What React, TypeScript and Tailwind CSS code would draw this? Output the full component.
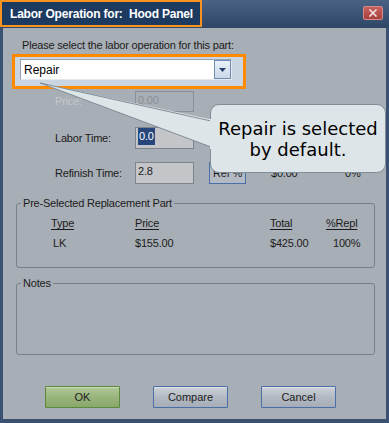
import React from "react";

const ui = "font-['Liberation_Sans',Arial,sans-serif]";

function GroupBox({ title, className, children }: { title: string; className: string; children?: React.ReactNode }) {
  return (
    <fieldset className={`border border-[#7a8089] rounded-[3px] ml-[13px] w-[359px] ${className}`}>
      <legend className="ml-[4px] px-[2px] text-[11px] leading-[13px] tracking-[-0.2px] text-[#1c1c1c]">{title}</legend>
      {children}
    </fieldset>
  );
}

function Btn({ label, ok }: { label: string; ok?: boolean }) {
  return (
    <div
      className={[
        "w-[75px] h-[22px] flex items-center justify-center text-[11px] text-[#1e1e1e] rounded-[1px] border",
        ok
          ? "border-[#5b8a3e] bg-gradient-to-b from-[#b2c89a] via-[#98b47b] to-[#8aa76c] shadow-[inset_0_1px_0_#c9dab5]"
          : "border-[#4a6ea8] bg-gradient-to-b from-[#cdd2d9] via-[#b3b9c2] to-[#a6adb7] shadow-[inset_0_1px_0_#dde1e6]",
      ].join(" ")}
    >
      {label}
    </div>
  );
}

export default function App() {
  return (
    <div className={`relative w-[389px] h-[423px] bg-[#3a5171] flex flex-col overflow-hidden ${ui}`}>
      {/* title bar */}
      <div className="h-[28px] flex items-start justify-between bg-gradient-to-b from-[#4a6283] to-[#2f4767]">
        <div className="h-[27px] w-[202px] border-2 border-[#f7931e] bg-[#1d3a61] flex items-center pl-[8px]">
          <span className="text-white font-bold text-[12px] tracking-[-0.2px] whitespace-pre">Labor Operation for:  Hood Panel</span>
        </div>
        <div className="mt-[6px] mr-[6px] w-[20px] h-[14px] rounded-[2px] border border-[#d98a88] bg-gradient-to-b from-[#c8605d] to-[#a8403e] flex items-center justify-center">
          <svg width="10" height="8" viewBox="0 0 10 8">
            <path d="M1.5 0.5 L8.5 7.5 M8.5 0.5 L1.5 7.5" stroke="#f2e4e4" strokeWidth="1.6" />
          </svg>
        </div>
      </div>

      {/* body */}
      <div className="flex-1 mx-[3px] mb-[4px] bg-[#a8aeb5] flex flex-col text-[#1c1c1c]">
        <div className="pt-[10px] pl-[19px] text-[11px] leading-[14px] tracking-[-0.2px]">
          Please select the labor operation for this part:
        </div>

        <div className="mt-[2px] ml-[9px] w-[234px] h-[35px] border-[3px] border-[#ff8a00] bg-[#c9d5e0] pt-[2px] pl-[5px]">
          <div className="w-[212px] h-[21px] flex bg-white border border-[#9aa3ad] border-b-[#e4e8ec] border-r-[#e4e8ec]">
            <div className="flex-1 flex items-center pl-[3px] text-[12px] text-black">Repair</div>
            <div className="w-[17px] h-[19px] border border-[#6d8db5] bg-gradient-to-b from-[#eaf1f8] to-[#c9d8e8] flex items-center justify-center">
              <svg width="7" height="4" viewBox="0 0 7 4">
                <path d="M0 0 H7 L3.5 4 Z" fill="#23406e" />
              </svg>
            </div>
          </div>
        </div>

        <div className="mt-[2px] h-[21px] flex items-center pl-[52px] text-[11px] tracking-[-0.2px]">
          <span className="w-[80px] text-[#c3c7cc]">Price:</span>
          <div className="w-[59px] h-[21px] border border-[#8a9098] px-[2px] flex items-start text-[#8a8f96] leading-[17px]">0.00</div>
        </div>

        <div className="mt-[15px] h-[22px] flex items-center pl-[52px] text-[11px] tracking-[-0.2px]">
          <span className="w-[80px]">Labor Time:</span>
          <div className="w-[59px] h-[22px] border border-[#7e848c] bg-[#c3c5c8] px-[2px] flex items-start leading-[17px]">
            <span className="bg-[#27467c] text-white px-[1px]">0.0</span>
          </div>
        </div>

        <div className="mt-[13px] h-[22px] flex items-center pl-[52px] text-[11px] tracking-[-0.2px]">
          <span className="w-[80px]">Refinish Time:</span>
          <div className="w-[59px] h-[22px] border border-[#7e848c] bg-[#c3c5c8] px-[2px] flex items-start leading-[17px]">2.8</div>
          <div className="ml-[15px] w-[37px] h-[22px] border border-[#4a6ea8] bg-[#b4bac3] flex items-center justify-center">Ref %</div>
          <span className="ml-[25px] w-[74px]">$0.00</span>
          <span>0%</span>
        </div>

        <GroupBox title="Pre-Selected Replacement Part" className="mt-[13px] h-[71px]">
          <div className="mt-[6px] grid grid-cols-[84px_135px_56px_1fr] pl-[34px] text-[11px] leading-[14px] tracking-[-0.2px]">
            <span className="underline underline-offset-2">Type</span>
            <span className="underline underline-offset-2">Price</span>
            <span className="underline underline-offset-2">Total</span>
            <span className="underline underline-offset-2">%Repl</span>
          </div>
          <div className="mt-[6px] grid grid-cols-[84px_135px_56px_1fr] pl-[34px] text-[11px] leading-[14px] tracking-[-0.2px]">
            <span className="pl-[2px]">LK</span>
            <span>$155.00</span>
            <span>$425.00</span>
            <span className="pl-[7px]">100%</span>
          </div>
        </GroupBox>

        <GroupBox title="Notes" className="mt-[9px] h-[78px]" />

        <div className="mt-[31px] ml-[42px] flex gap-[33px]">
          <Btn label="OK" ok />
          <Btn label="Compare" />
          <Btn label="Cancel" />
        </div>
      </div>

      {/* callout tail */}
      <svg className="absolute left-0 top-0 pointer-events-none" width="389" height="423">
        <polygon points="40,83 214,120 214,148" fill="#dde5e8" />
        <path d="M40 83 L211 121 M40 83 L211 147" stroke="#7f8e96" strokeWidth="1" fill="none" />
      </svg>

      {/* callout */}
      <div className="absolute left-[210px] top-[104px] w-[176px] h-[69px] rounded-[9px] border border-[#7f8e96] bg-[#dde5e8] flex items-center justify-center text-center font-['DejaVu_Sans',sans-serif] text-[18px] leading-[21px] text-black">
        Repair is selected
        <br />
        by default.
      </div>
      <div className="absolute left-[210px] top-[119px] w-[2px] h-[30px] bg-[#dde5e8]" />
    </div>
  );
}
